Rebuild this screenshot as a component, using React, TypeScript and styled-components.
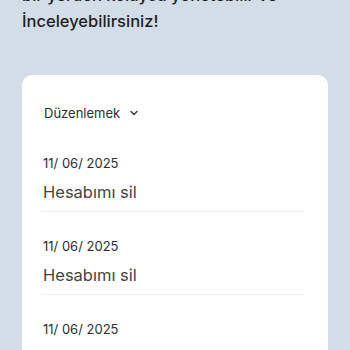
import styled, { createGlobalStyle } from "styled-components"

const GlobalStyle = createGlobalStyle`
  html, body {
    margin: 0;
    padding: 0;
    background: #d3dde8;
    font-family: Inter, "Noto Sans", sans-serif;
    overflow: hidden;
  }
`

const items = [
  { date: "11/ 06/ 2025", title: "Hesabımı sil" },
  { date: "11/ 06/ 2025", title: "Hesabımı sil" },
  { date: "11/ 06/ 2025", title: "Hesabımı sil" },
]

export default function App() {
  return (
    <Page>
      <GlobalStyle />
      <Heading>
        bir yerden kolayca yönetebilir ve
        <br />
        İnceleyebilirsiniz!
      </Heading>
      <Card>
        <Filter>
          Düzenlemek
          <svg width="10" height="10" viewBox="0 0 10 10">
            <path d="M2 3.5 L5 6.5 L8 3.5" fill="none" stroke="#333" strokeWidth="1.3" strokeLinecap="round" strokeLinejoin="round" />
          </svg>
        </Filter>
        {items.map((item, i) => (
          <Row key={i}>
            <DateText>{item.date}</DateText>
            <Title>{item.title}</Title>
          </Row>
        ))}
      </Card>
    </Page>
  )
}

const Page = styled.div`
  width: 350px;
  height: 350px;
  overflow: hidden;
`

const Heading = styled.h1`
  margin: -18px 0 0 22px;
  font-size: 16.5px;
  font-weight: 500;
  line-height: 26px;
  color: #1e1e1e;
`

const Card = styled.div`
  margin: 41px 22px 0;
  background: #fff;
  border-radius: 10px;
  padding: 28px 24px 0 19px;
`

const Filter = styled.div`
  display: flex;
  align-items: center;
  gap: 9px;
  padding-left: 3px;
  font-size: 13px;
  line-height: 20px;
  color: #2e2e2e;
  margin-bottom: 6px;
`

const Row = styled.div`
  padding: 24px 0 6px;
  border-bottom: 1px solid #f1f1f1;
`

const DateText = styled.div`
  padding-left: 2px;
  font-size: 13px;
  line-height: 20px;
  color: #2e2e2e;
`

const Title = styled.div`
  margin-top: 6px;
  padding-left: 2px;
  font-size: 16.5px;
  line-height: 26px;
  color: #444;
`
